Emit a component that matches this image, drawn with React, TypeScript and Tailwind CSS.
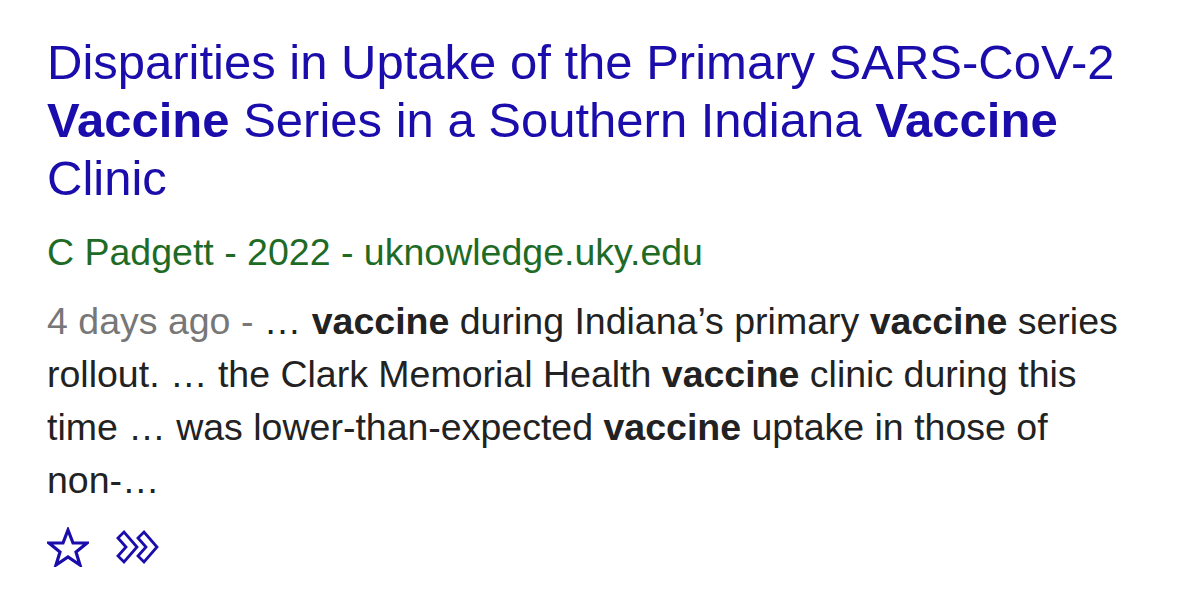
const B = ({ children }: { children: React.ReactNode }) => <b className="font-bold">{children}</b>;

export default function App() {
  return (
    <div className="w-[1200px] h-[594px] bg-white pl-[47px] pt-[33px] font-['Liberation_Sans',Arial,sans-serif]">
      <h3 className="text-[49px] leading-[58px] text-[#1a0dab] font-normal whitespace-nowrap">
        Disparities in Uptake of the Primary SARS-CoV-2
        <br />
        <B>Vaccine</B> Series in a Southern Indiana <B>Vaccine</B>
        <br />
        Clinic
      </h3>
      <div className="mt-[23px] text-[37.5px] leading-[44px] text-[#1e6b26]">
        C Padgett - 2022 - uknowledge.uky.edu
      </div>
      <p className="mt-[21px] text-[37.5px] leading-[53px] text-[#222] whitespace-nowrap">
        <span className="text-[#777]">4 days ago - </span>… <B>vaccine</B> during Indiana’s primary <B>vaccine</B> series
        <br />
        rollout. … the Clark Memorial Health <B>vaccine</B> clinic during this
        <br />
        time … was lower-than-expected <B>vaccine</B> uptake in those of
        <br />
        non-…
      </p>
      <div className="mt-[20px] flex items-center gap-[27px]">
        <svg width="42" height="40" viewBox="0 0 42 40" fill="none" stroke="#1a0dab" strokeWidth="3.2" strokeLinejoin="miter">
          <polygon points="21,3 26,16 40,16 29,25 33,38 21,30 9,38 13,25 2,16 16,16" />
        </svg>
        <svg width="46" height="36" viewBox="0 0 46 36" fill="none" stroke="#1a0dab" strokeWidth="2.8" strokeLinejoin="miter">
          <polygon points="2,9 8,3 21,18 8,33 2,27 10,18" />
          <polygon points="22,9 28,3 41,18 28,33 22,27 30,18" />
        </svg>
      </div>
    </div>
  );
}
